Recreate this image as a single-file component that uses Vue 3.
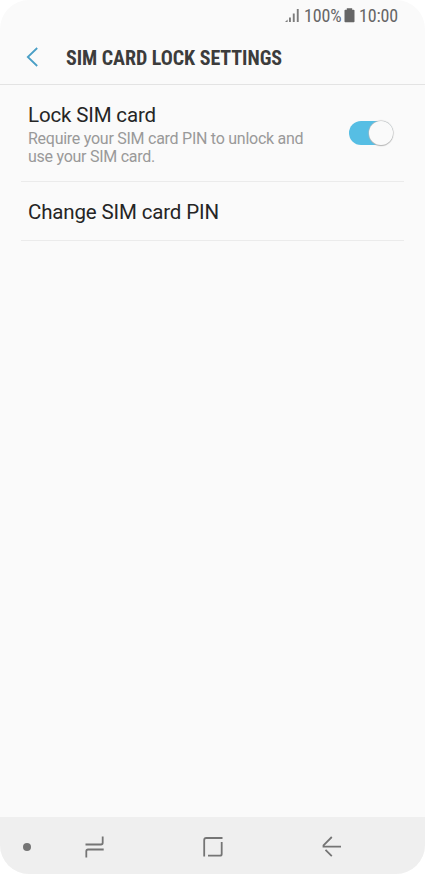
<template>
  <div class="phone">
    <header class="status-bar">
      <svg class="signal" width="15" height="14" viewBox="0 0 15 14">
        <path d="M0 14L2.600 11.400V14ZM4 9.500H5.900V14H4ZM7.800 5.500H9.700V14H7.800ZM11.800 1H13.700V14H11.800Z" fill="#7c7c7c" />
      </svg>
      <span class="battery-level">100%</span>
      <svg class="battery" width="11" height="15" viewBox="0 0 11 15">
        <path d="M2.800 0.300H8.200V1.800H9.800Q10.500 1.800 10.500 2.500V13.500Q10.500 14.200 9.800 14.200H1.200Q0.500 14.200 0.500 13.500V2.500Q0.500 1.800 1.200 1.800H2.800Z" fill="#666" />
      </svg>
      <span class="clock">10:00</span>
    </header>

    <div class="title-bar">
      <button class="back" aria-label="Back">
        <svg width="12" height="20" viewBox="0 0 12 20">
          <path d="M11.200 1L1.800 10L11.200 19" fill="none" stroke="#4a9fc6" stroke-width="1.800" />
        </svg>
      </button>
      <h1>SIM CARD LOCK SETTINGS</h1>
    </div>

    <main class="list">
      <div class="item lock">
        <div class="texts">
          <div class="label">Lock SIM card</div>
          <div class="summary">Require your SIM card PIN to unlock and use your SIM card.</div>
        </div>
        <button class="switch" :class="{ on: locked }" role="switch" :aria-checked="locked" @click="locked = !locked">
          <span class="knob"></span>
        </button>
      </div>
      <div class="item change">
        <div class="label">Change SIM card PIN</div>
      </div>
    </main>

    <nav class="nav-bar">
      <span class="dot"></span>
      <svg class="recents" width="20" height="22" viewBox="0 0 20 22">
        <path d="M0.500 8.500H16Q17.700 8.500 17.700 6.800V0.500M18.700 13.500H3Q1.300 13.500 1.300 15.200V21.500" />
      </svg>
      <svg class="home" width="20" height="20" viewBox="0 0 20 20">
        <path d="M1.200 19.500V3Q1.200 1 3.200 1H19.500M18.700 5V17Q18.700 18.700 17 18.700H5" />
      </svg>
      <svg class="return" width="20" height="21" viewBox="0 0 20 21">
        <path d="M9.800 1L1.500 9.300V10.600H19M3.500 13.800L9.800 20.100" />
      </svg>
    </nav>
  </div>
</template>

<script setup>
import { ref } from 'vue'

const locked = ref(true)
</script>

<style>
body {
  margin: 0;
  background: #fff;
}
</style>

<style scoped>
.phone {
  display: flex;
  flex-direction: column;
  width: 425px;
  height: 874px;
  overflow: hidden;
  border-radius: 29px;
  background: #fafafa;
  font-family: Roboto, "Liberation Sans", sans-serif;
}

button {
  padding: 0;
  border: 0;
  background: none;
  cursor: pointer;
}

svg {
  display: block;
  flex: none;
}

.status-bar {
  display: flex;
  align-items: center;
  box-sizing: border-box;
  height: 30px;
  padding-left: 285px;
  color: #666;
  font-family: "Roboto Condensed", Roboto, sans-serif;
  font-stretch: 75%;
  font-size: 18px;
  letter-spacing: -0.150px;
  line-height: 30px;
}

.battery-level {
  width: 37px;
  margin: 1px 3px 0 4px;
}

.clock {
  margin: 1px 0 0 4px;
}

.title-bar {
  display: flex;
  align-items: center;
  box-sizing: border-box;
  height: 55px;
  padding-left: 26px;
  border-bottom: 1px solid #e3e3e3;
}

.back {
  width: 40px;
}

h1 {
  margin: 2px 0 0;
  color: #3c3c3c;
  font-family: "Roboto Condensed", Roboto, sans-serif;
  font-stretch: 75%;
  font-size: 20px;
  font-weight: 700;
  letter-spacing: -0.050px;
  white-space: nowrap;
}

.list {
  flex: 1;
  padding: 0 21px;
}

.item {
  box-sizing: border-box;
  padding-left: 7px;
  border-bottom: 1px solid #ebebeb;
}

.lock {
  display: flex;
  height: 97px;
  padding-top: 18px;
}

.change {
  height: 59px;
  padding-top: 18px;
}

.texts {
  width: 321px;
}

.label {
  color: #252525;
  font-size: 20.500px;
  letter-spacing: -0.150px;
  line-height: 24px;
}

.summary {
  width: 290px;
  margin-top: 3px;
  color: #999;
  font-size: 16px;
  letter-spacing: -0.260px;
  line-height: 18px;
}

.switch {
  display: flex;
  width: 44px;
  height: 24px;
  margin-top: 18px;
  border-radius: 12px;
  background: #bbb;
}

.switch.on {
  justify-content: flex-end;
  background: #56bee4;
}

.knob {
  width: 24px;
  height: 24px;
  border-radius: 50%;
  background: #fafafa;
  box-shadow: 0 0 1px 0.500px #bbb, 0 1px 1px #b5b5b5;
}

.nav-bar {
  display: flex;
  align-items: center;
  box-sizing: border-box;
  height: 57px;
  padding: 2px 0 0 23px;
  background: #efefef;
}

.nav-bar path {
  fill: none;
  stroke: #757575;
  stroke-width: 1.800;
}

.dot {
  width: 8px;
  height: 8px;
  border-radius: 50%;
  background: #757575;
}

.recents {
  margin-left: 54px;
}

.home {
  margin-left: 98px;
}

.return {
  margin-left: 99px;
}
</style>
